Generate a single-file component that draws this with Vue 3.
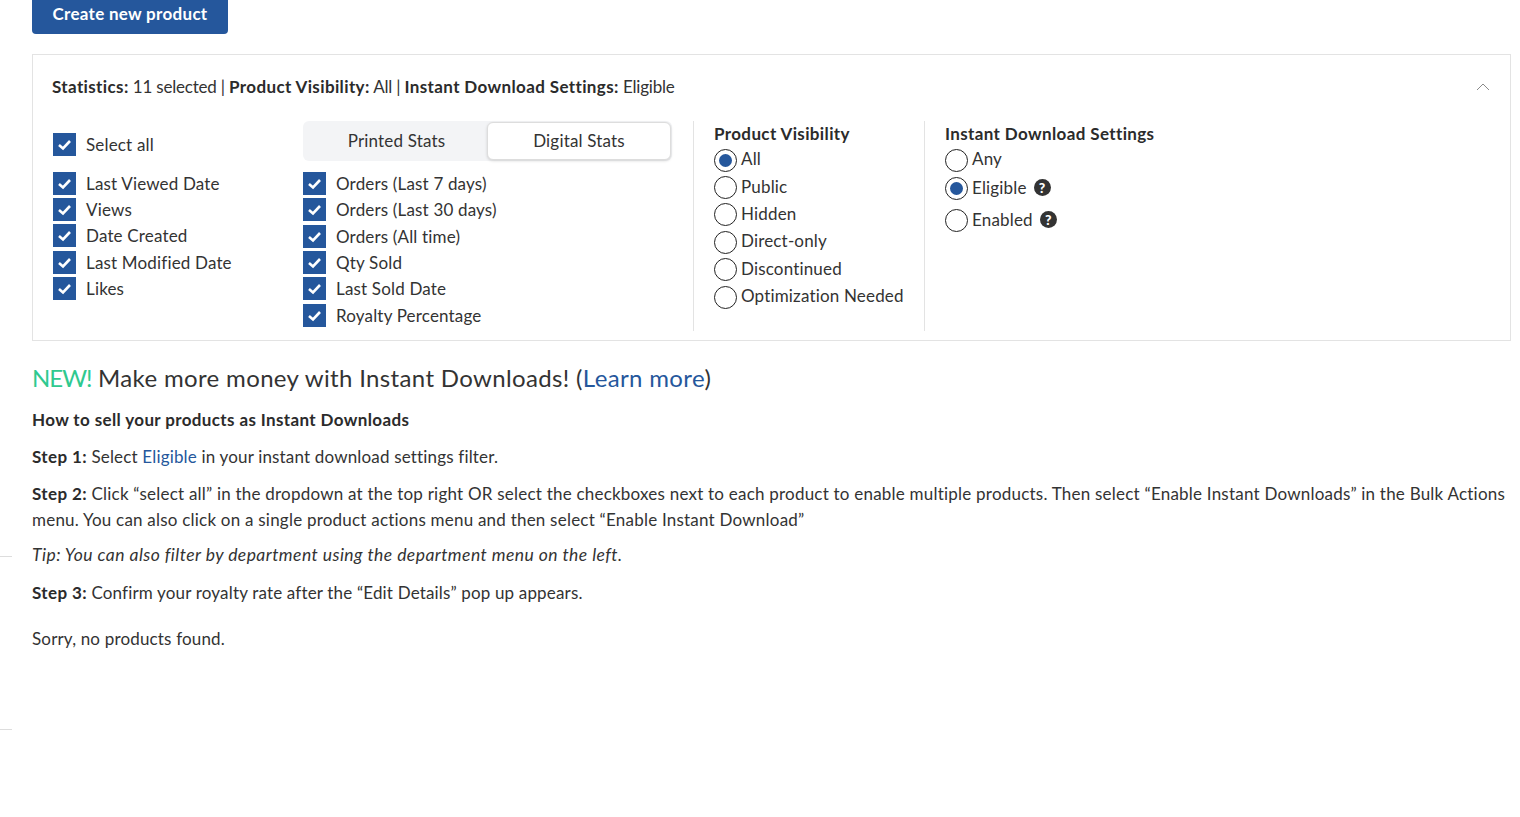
<template>
  <div class="page">
    <!-- stray rules from the sidebar that is cut off on the left -->
    <div class="edge-line edge-a"></div>
    <div class="edge-line edge-b"></div>

    <button class="create-btn">Create new product</button>

    <section class="filters">
      <div class="summary">
        <p>
          <b>Statistics:</b> 11 selected | <b>Product Visibility:</b> All | <b>Instant Download Settings:</b> Eligible
        </p>
        <svg class="chevron" viewBox="0 0 14 8" width="14" height="8">
          <path d="M1 7 L7 1 L13 7" fill="none" stroke="#8a8a8a" stroke-width="1" />
        </svg>
      </div>

      <div class="filter-body">
        <div class="col-general">
          <label class="check select-all"><span class="box"><svg viewBox="0 0 23 23"><path d="M6 12 L10 15.5 L17 8" /></svg></span>Select all</label>
          <label v-for="item in generalStats" :key="item" class="check">
            <span class="box"><svg viewBox="0 0 23 23"><path d="M6 12 L10 15.5 L17 8" /></svg></span>{{ item }}
          </label>
        </div>

        <div class="col-stats">
          <div class="tabs">
            <button class="tab printed">Printed Stats</button>
            <button class="tab active">Digital Stats</button>
          </div>
          <label v-for="item in digitalStats" :key="item" class="check">
            <span class="box"><svg viewBox="0 0 23 23"><path d="M6 12 L10 15.5 L17 8" /></svg></span>{{ item }}
          </label>
        </div>

        <div class="col-visibility">
          <h4>Product Visibility</h4>
          <label v-for="opt in visibility" :key="opt" class="radio" :class="{ on: opt === 'All' }">
            <span class="dot"></span>{{ opt }}
          </label>
        </div>

        <div class="col-instant">
          <h4>Instant Download Settings</h4>
          <label class="radio"><span class="dot"></span>Any</label>
          <label class="radio on eligible"><span class="dot"></span>Eligible<span class="help">?</span></label>
          <label class="radio enabled"><span class="dot"></span>Enabled<span class="help">?</span></label>
        </div>
      </div>
    </section>

    <h2 class="promo"><span class="new">NEW!</span> Make more money with Instant Downloads! (<a>Learn more</a>)</h2>
    <p class="how"><b>How to sell your products as Instant Downloads</b></p>
    <p class="para"><b>Step 1:</b> Select <a>Eligible</a> in your instant download settings filter.</p>
    <p class="para wide"><b>Step 2:</b> Click “select all” in the dropdown at the top right OR select the checkboxes next to each product to enable multiple products. Then select “Enable Instant Downloads” in the Bulk Actions menu. You can also click on a single product actions menu and then select “Enable Instant Download”</p>
    <p class="para tip"><i>Tip: You can also filter by department using the department menu on the left.</i></p>
    <p class="para"><b>Step 3:</b> Confirm your royalty rate after the “Edit Details” pop up appears.</p>
    <p class="empty">Sorry, no products found.</p>
  </div>
</template>

<script setup>
const generalStats = ['Last Viewed Date', 'Views', 'Date Created', 'Last Modified Date', 'Likes']
const digitalStats = ['Orders (Last 7 days)', 'Orders (Last 30 days)', 'Orders (All time)', 'Qty Sold', 'Last Sold Date', 'Royalty Percentage']
const visibility = ['All', 'Public', 'Hidden', 'Direct-only', 'Discontinued', 'Optimization Needed']
</script>

<style scoped>
.page {
  position: relative;
  height: 817px;
  overflow: hidden;
  padding: 0 9px 0 32px;
  box-sizing: border-box;
  font-family: Lato, "Open Sans", sans-serif;
  font-size: 17px;
  letter-spacing: 0.17px;
  color: #333;
}

.edge-line {
  position: absolute;
  left: 0;
  width: 12px;
  height: 1px;
  background: #ddd;
}
.edge-a { top: 556px; }
.edge-b { top: 729px; }

.create-btn {
  display: block;
  width: 196px;
  height: 42px;
  margin-top: -8px;
  padding: 0;
  border: none;
  border-radius: 4px;
  background: #25579c;
  color: #fff;
  font: 700 17px Lato, sans-serif;
  letter-spacing: 0.3px;
}

.filters {
  margin-top: 20px;
  height: 287px;
  box-sizing: border-box;
  border: 1px solid #e3e3e3;
}

.summary {
  display: flex;
  justify-content: space-between;
  align-items: center;
  height: 66px;
  padding: 0 20px 4px 19px;
  box-sizing: border-box;
  letter-spacing: -0.2px;
}
.summary p { margin: 0; }
.summary b, h4, .how b, .para b {
  font-weight: 700;
  letter-spacing: 0.37px;
  color: #2b2b2b;
}
.chevron { margin-top: 1px; }

.filter-body {
  display: flex;
  height: 210px;
  padding-left: 20px;
}

.col-general { width: 250px; }
.col-stats {
  width: 369px;
  padding-right: 21px;
  border-right: 1px solid #e3e3e3;
}
.col-visibility {
  width: 190px;
  padding: 0 20px;
  border-right: 1px solid #e3e3e3;
}
.col-instant { padding-left: 20px; }

.check {
  display: flex;
  align-items: center;
  height: 26.3px;
}
.select-all {
  height: 23px;
  margin: 12px 0 14px;
}
.box {
  width: 23px;
  height: 23px;
  flex: none;
  margin-right: 10px;
  background: #25579c;
}
.box svg { display: block; }
.box path {
  fill: none;
  stroke: #fff;
  stroke-width: 2.6;
}

.tabs {
  display: flex;
  height: 40px;
  margin-bottom: 9.5px;
  border-radius: 6px;
  background: #f3f4f6;
}
.tab {
  flex: 1;
  padding: 0 0 2px;
  border: none;
  background: none;
  color: #333;
  font: 17px Lato, sans-serif;
  letter-spacing: 0.17px;
}
.tab.printed { flex: 0 0 183px; padding-left: 4px; }
.tab.active {
  margin: 1px;
  border: 1px solid #ddd;
  border-radius: 6px;
  background: #fff;
  box-shadow: 0 1px 3px rgba(0, 0, 0, 0.15);
}

h4 {
  margin: 0;
  height: 24px;
  padding-top: 1px;
  box-sizing: border-box;
  font-size: 17px;
  line-height: 24px;
}

.radio {
  display: flex;
  align-items: center;
  height: 27.4px;
}
.dot {
  position: relative;
  width: 23px;
  height: 23px;
  flex: none;
  box-sizing: border-box;
  margin: 3px 4px 0 0;
  border: 1px solid #222;
  border-radius: 50%;
}
.radio.on .dot::after {
  content: "";
  position: absolute;
  inset: 4px;
  border-radius: 50%;
  background: #25579c;
}
.eligible { height: 30px; }
.enabled { height: 32px; margin-top: 1px; }
.help {
  width: 17px;
  height: 17px;
  margin-left: 7px;
  border-radius: 50%;
  background: #333;
  color: #fff;
  font-size: 14px;
  font-weight: 900;
  line-height: 17px;
  text-align: center;
}

.promo {
  margin: 20px 0 0;
  font-size: 24px;
  font-weight: 400;
  letter-spacing: 0.35px;
  line-height: 34px;
}
.new { color: #2fc98f; letter-spacing: -1px; }
a { color: #25579c; }

.how { margin: 13px 0 12px; line-height: 24px; }
.para { margin: 10.5px 0 0; line-height: 26px; }
.wide { letter-spacing: 0.22px; }
.tip { margin: 9.5px 0 11.5px; font-size: 17.5px; letter-spacing: 0.45px; }
.empty { margin: 20px 0 0; line-height: 26px; }
</style>
